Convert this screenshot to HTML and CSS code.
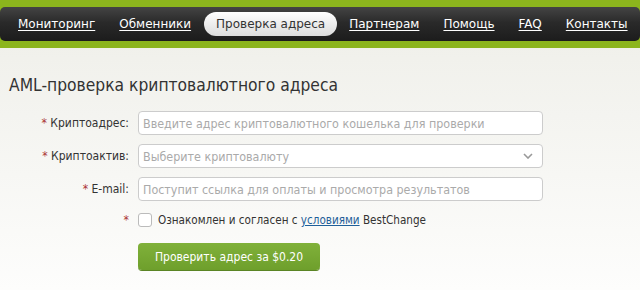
FILE: index.html
```html
<!DOCTYPE html>
<html lang="ru">
<head>
<meta charset="utf-8">
<link rel="stylesheet" href="styles.css">
</head>
<body>
<header class="topband">
  <nav class="navbar">
    <a class="nav-link" href="#">Мониторинг</a>
    <a class="nav-link" href="#">Обменники</a>
    <span class="nav-tab">Проверка адреса</span>
    <a class="nav-link" href="#">Партнерам</a>
    <a class="nav-link" href="#">Помощь</a>
    <a class="nav-link" href="#">FAQ</a>
    <a class="nav-link" href="#">Контакты</a>
  </nav>
</header>
<main class="content">
  <h1 class="title">AML-проверка криптовалютного адреса</h1>
  <form class="form">
    <label class="label"><span class="req">*</span> Криптоадрес:</label>
    <div class="field"><input class="input" type="text" placeholder="Введите адрес криптовалютного кошелька для проверки"></div>
    <label class="label"><span class="req">*</span> Криптоактив:</label>
    <div class="field select">
      <span class="select-text">Выберите криптовалюту</span>
      <svg class="chevron" width="10" height="6" viewBox="0 0 10 6"><path d="M1 1l4 4 4-4" fill="none" stroke="#999" stroke-width="1.6"/></svg>
    </div>
    <label class="label"><span class="req">*</span> E-mail:</label>
    <div class="field"><input class="input" type="text" placeholder="Поступит ссылка для оплаты и просмотра результатов"></div>
    <span class="label req">*</span>
    <div class="agree"><span class="checkbox"></span><span>Ознакомлен и согласен с <a class="terms" href="#">условиями</a> BestChange</span></div>
    <span></span>
    <div><button type="button" class="btn">Проверить адрес за $0.20</button></div>
  </form>
</main>
</body>
</html>
```
FILE: styles.css
```css
html, body { margin: 0; padding: 0; }
body {
  width: 640px; height: 290px; overflow: hidden;
  font-family: "DejaVu Sans Condensed", "DejaVu Sans", sans-serif;
  background: linear-gradient(#eeeee8, #fdfdfc);
  color: #333;
}
.topband {
  background: #8cb51d;
  padding: 7px 0 7px;
}
.navbar {
  height: 34px;
  background: linear-gradient(#444 0%, #2a2a2a 45%, #1c1c1c 100%);
  border-radius: 5px;
  display: flex;
  align-items: center;
  padding: 0 0 0 18px;
  white-space: nowrap;
}
.nav-link {
  flex-shrink: 0;
  color: #fff;
  font-family: "DejaVu Sans", sans-serif;
  font-size: 12px;
  text-decoration: underline;
  text-underline-offset: 2px;
  margin-right: 24px;
}
.nav-tab {
  flex-shrink: 0;
  display: inline-flex; align-items: center;
  height: 24px;
  padding: 0 12px 0 12px;
  margin: 0 12px 0 -11px;
  border-radius: 12px;
  background: linear-gradient(#ffffff, #dcdcdc);
  color: #333;
  font-family: "DejaVu Sans", sans-serif;
  font-size: 12px;
}
.content { padding: 0 0 0 9px; }
.title {
  font-weight: normal;
  font-size: 17.3px;
  margin: 27px 0 16px;
  color: #333;
}
.form {
  display: grid;
  grid-template-columns: 120px 405px;
  column-gap: 9px;
  row-gap: 9px;
  align-items: center;
}
.label { text-align: right; font-size: 12px; color: #333; }
.req { color: #a33; }
.field {
  height: 24px;
  box-sizing: border-box;
  border: 1px solid #ccc;
  border-radius: 4px;
  background: #fff;
  display: flex; align-items: center;
}
.input {
  border: 0; outline: 0; background: transparent;
  width: 100%;
  padding: 0 4px;
  font: 12.4px "DejaVu Sans Condensed", "DejaVu Sans", sans-serif;
}
.input::placeholder { color: #aaa; }
.select { justify-content: space-between; padding: 0 9px 0 4px; }
.select-text { font-size: 12.4px; color: #aaa; }
.agree { display: flex; align-items: center; gap: 6px; font-size: 11.6px; height: 20px; }
.checkbox {
  width: 12px; height: 12px;
  border: 1px solid #bbb; border-radius: 3px; background: #fff;
}
.terms { color: #1f5f99; }
.btn {
  margin-top: 4px;
  width: 182px; height: 27px;
  border: 0; border-radius: 4px;
  background: linear-gradient(#80b13a, #6e9f2c);
  box-shadow: 0 1px 0 #5a8424;
  color: #fff;
  font: 12px "DejaVu Sans Condensed", "DejaVu Sans", sans-serif;
}
```
